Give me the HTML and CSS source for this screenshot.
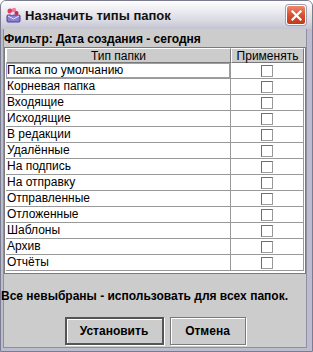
FILE: index.html
```html
<!DOCTYPE html>
<html lang="ru">
<head>
  <meta charset="UTF-8" />
  <title>Назначить типы папок</title>
  <link rel="stylesheet" href="styles.css">
</head>
<body>
  <div class="window">
    <div class="titlebar">
      <svg class="app-icon" width="16" height="16" viewBox="0 0 16 16">
        <rect x="2" y="8" width="13" height="7" rx="1" fill="#8c7fd6" stroke="#4d3f9a" />
        <path d="M3 9 L8.5 12 L14 9" fill="none" stroke="#e8e4ff" />
        <circle cx="5" cy="4" r="2.5" fill="#e23b5b" />
        <circle cx="9" cy="3" r="2.2" fill="#f07aa0" />
        <circle cx="11.5" cy="6" r="2" fill="#c9284a" />
        <circle cx="7" cy="6.5" r="1.5" fill="#ffd2e0" />
      </svg>
      <span class="title">Назначить типы папок</span>
      <button class="close" type="button">
        <svg width="11" height="11" viewBox="0 0 11 11">
          <path d="M1.5 1.5 L9.5 9.5 M9.5 1.5 L1.5 9.5" stroke="#fff" stroke-width="2.2" stroke-linecap="square" />
        </svg>
      </button>
    </div>

    <div class="content">
      <div class="filter">Фильтр: Дата создания - сегодня</div>

      <div class="scrollpane">
        <div class="grid">
          <div class="th">Тип папки</div>
          <div class="th">Применять</div>

          <div class="td focus">Папка по умолчанию</div>
          <div class="td check"><span class="box"></span></div>
          <div class="td">Корневая папка</div>
          <div class="td check"><span class="box"></span></div>
          <div class="td">Входящие</div>
          <div class="td check"><span class="box"></span></div>
          <div class="td">Исходящие</div>
          <div class="td check"><span class="box"></span></div>
          <div class="td">В редакции</div>
          <div class="td check"><span class="box"></span></div>
          <div class="td">Удалённые</div>
          <div class="td check"><span class="box"></span></div>
          <div class="td">На подпись</div>
          <div class="td check"><span class="box"></span></div>
          <div class="td">На отправку</div>
          <div class="td check"><span class="box"></span></div>
          <div class="td">Отправленные</div>
          <div class="td check"><span class="box"></span></div>
          <div class="td">Отложенные</div>
          <div class="td check"><span class="box"></span></div>
          <div class="td">Шаблоны</div>
          <div class="td check"><span class="box"></span></div>
          <div class="td">Архив</div>
          <div class="td check"><span class="box"></span></div>
          <div class="td">Отчёты</div>
          <div class="td check"><span class="box"></span></div>
        </div>
      </div>

      <div class="note">Все невыбраны - использовать для всех папок.</div>

      <div class="buttons">
        <button class="btn default" type="button">Установить</button>
        <button class="btn cancel" type="button">Отмена</button>
      </div>
    </div>
  </div>
</body>
</html>
```

FILE: styles.css
```css
body {
  margin: 0;
  padding: 0;
  font-family: "Liberation Sans", Arial, sans-serif;
  font-size: 12px;
  color: #000;
  background: #fff;
}

.window {
  width: 313px;
  height: 352px;
  box-sizing: border-box;
  border: 1px solid #7b7b92;
  border-radius: 6px 6px 0 0;
  background: #bcbccf;
  display: flex;
  flex-direction: column;
  overflow: hidden;
}

/* title bar */
.titlebar {
  height: 28px;
  flex: none;
  display: flex;
  align-items: center;
  padding: 0 6px 0 4px;
  background: linear-gradient(#ffffff, #eeeef3 30%, #d9d9e2 70%, #c4c4d1);
}
.app-icon {
  flex: none;
  margin-right: 4px;
}
.title {
  flex: 1;
  font-size: 13px;
  font-weight: bold;
  color: #111;
  padding-top: 1px;
}
.close {
  width: 20px;
  height: 20px;
  padding: 0;
  display: flex;
  align-items: center;
  justify-content: center;
  border: 1px solid #fff;
  border-radius: 3px;
  background: linear-gradient(#ee8a6c, #d9502f 50%, #c13a1c);
  box-shadow: 0 0 0 1px #a0a0b0;
}

/* dialog body */
.content {
  flex: 1;
  margin: 0 5px 3px 2px;
  border: 1px solid #8e8ea6;
  border-top: none;
  background: #cccccc;
  display: flex;
  flex-direction: column;
}
.filter {
  font-weight: bold;
  line-height: 14px;
  padding: 3px 0 0 0;
  height: 15px;
}

.scrollpane {
  border: 1px solid #7a7a7a;
  box-shadow: inset 1px 1px 0 #fff;
  padding: 0 1px 2px 1px;
  background: #fff;
}
.grid {
  display: grid;
  grid-template-columns: 225px 73px;
}
.th {
  height: 15px;
  box-sizing: border-box;
  line-height: 14px;
  text-align: center;
  background: #cccccc;
  border-top: 1px solid #fff;
  border-left: 1px solid #fff;
  border-right: 1px solid #7a7a7a;
  border-bottom: 1px solid #7a7a7a;
}
.td {
  height: 16px;
  box-sizing: border-box;
  line-height: 15px;
  padding-left: 1px;
  border-right: 1px solid #999;
  border-bottom: 1px solid #999;
  background: #fff;
  white-space: nowrap;
}
.td.focus {
  box-shadow: inset 0 0 0 1px #9999cc;
}
.td.check {
  display: flex;
  justify-content: center;
  align-items: flex-start;
  padding: 2px 0 0 0;
}
.box {
  width: 12px;
  height: 12px;
  box-sizing: border-box;
  border: 1px solid #6f6f6f;
  border-right-color: #9a9a9a;
  border-bottom-color: #9a9a9a;
  background: #fff;
}

.note {
  font-weight: bold;
  line-height: 14px;
  margin: 15px 0 0 -3px;
  white-space: nowrap;
}

.buttons {
  display: flex;
  justify-content: center;
  gap: 6px;
  margin-top: 14px;
}
.btn {
  height: 28px;
  font-family: "Liberation Sans", Arial, sans-serif;
  font-size: 12px;
  font-weight: bold;
  color: #000;
  background: #cccccc;
  border: 1px solid #7a7a7a;
  box-shadow: inset 1px 1px 0 #fff, 1px 1px 0 #fff;
  padding: 0;
}
.btn.default {
  width: 99px;
  border: 2px solid #555;
}
.btn.cancel {
  width: 76px;
}
```
